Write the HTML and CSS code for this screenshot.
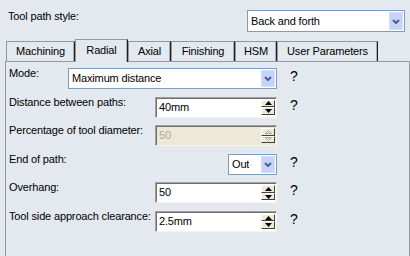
FILE: index.html
```html
<!DOCTYPE html>
<html>
<head>
<meta charset="utf-8">
<link rel="stylesheet" href="styles.css">
</head>
<body>
<div class="top">
  <span class="top-label">Tool path style:</span>
  <div class="combo combo-style">
    <span class="combo-text">Back and forth</span>
    <span class="combo-btn"><svg width="8" height="5" viewBox="0 0 8 5"><polyline points="1,1 4,4 7,1" fill="none" stroke="#4d6185" stroke-width="2"/></svg></span>
  </div>
</div>
<div class="tabs">
  <div class="tab tab-machining">Machining</div>
  <div class="tab tab-radial active">Radial</div>
  <div class="tab tab-axial">Axial</div>
  <div class="tab tab-finishing">Finishing</div>
  <div class="tab tab-hsm">HSM</div>
  <div class="tab tab-user">User Parameters</div>
</div>
<div class="panel">
  <div class="row">
    <span class="label">Mode:</span>
    <div class="combo combo-mode">
      <span class="combo-text">Maximum distance</span>
      <span class="combo-btn"><svg width="8" height="5" viewBox="0 0 8 5"><polyline points="1,1 4,4 7,1" fill="none" stroke="#4d6185" stroke-width="2"/></svg></span>
    </div>
    <span class="help">?</span>
  </div>
  <div class="row">
    <span class="label">Distance between paths:</span>
    <div class="spin">
      <span class="spin-text">40mm</span>
      <span class="spin-btns">
        <span class="spin-btn"><svg width="7" height="4" viewBox="0 0 7 4"><path d="M0 4 L3.5 0 L7 4 Z" fill="#000"/></svg></span>
        <span class="spin-btn"><svg width="7" height="4" viewBox="0 0 7 4"><path d="M0 0 L3.5 4 L7 0 Z" fill="#000"/></svg></span>
      </span>
    </div>
    <span class="help">?</span>
  </div>
  <div class="row">
    <span class="label">Percentage of tool diameter:</span>
    <div class="spin disabled">
      <span class="spin-text">50</span>
      <span class="spin-btns">
        <span class="spin-btn"><svg width="7" height="4" viewBox="0 0 7 4"><path d="M0.5 3.5 L3.5 0.5 L6.5 3.5 Z" fill="none" stroke="#aca899" stroke-width="1"/></svg></span>
        <span class="spin-btn"><svg width="7" height="4" viewBox="0 0 7 4"><path d="M0.5 0.5 L3.5 3.5 L6.5 0.5 Z" fill="none" stroke="#aca899" stroke-width="1"/></svg></span>
      </span>
    </div>
    <span class="help"></span>
  </div>
  <div class="row">
    <span class="label">End of path:</span>
    <div class="combo combo-out">
      <span class="combo-text">Out</span>
      <span class="combo-btn"><svg width="8" height="5" viewBox="0 0 8 5"><polyline points="1,1 4,4 7,1" fill="none" stroke="#4d6185" stroke-width="2"/></svg></span>
    </div>
    <span class="help">?</span>
  </div>
  <div class="row">
    <span class="label">Overhang:</span>
    <div class="spin">
      <span class="spin-text">50</span>
      <span class="spin-btns">
        <span class="spin-btn"><svg width="7" height="4" viewBox="0 0 7 4"><path d="M0 4 L3.5 0 L7 4 Z" fill="#000"/></svg></span>
        <span class="spin-btn"><svg width="7" height="4" viewBox="0 0 7 4"><path d="M0 0 L3.5 4 L7 0 Z" fill="#000"/></svg></span>
      </span>
    </div>
    <span class="help">?</span>
  </div>
  <div class="row">
    <span class="label">Tool side approach clearance:</span>
    <div class="spin">
      <span class="spin-text">2.5mm</span>
      <span class="spin-btns">
        <span class="spin-btn"><svg width="7" height="4" viewBox="0 0 7 4"><path d="M0 4 L3.5 0 L7 4 Z" fill="#000"/></svg></span>
        <span class="spin-btn"><svg width="7" height="4" viewBox="0 0 7 4"><path d="M0 0 L3.5 4 L7 0 Z" fill="#000"/></svg></span>
      </span>
    </div>
    <span class="help">?</span>
  </div>
</div>
</body>
</html>
```
FILE: styles.css
```css
html, body {
  margin: 0;
  height: 100%;
  overflow: hidden;
}
body {
  background: #e3e9ef;
  font-family: "Liberation Sans", Arial, sans-serif;
  font-size: 11px;
  line-height: 13px;
  letter-spacing: -0.15px;
  color: #000;
}
.top {
  display: flex;
  justify-content: space-between;
  align-items: flex-start;
  padding: 10px 5px 0 8px;
  height: 29px;
}
.top-label {
  white-space: nowrap;
}
.combo {
  box-sizing: border-box;
  display: flex;
  align-items: center;
  height: 21px;
  border: 1px solid #7f9db9;
  background: #fff;
  padding-left: 3px;
}
.combo-style {
  width: 158px;
  height: 22px;
}
.combo-mode {
  width: 209px;
}
.combo-out {
  width: 49px;
}
.combo-text {
  white-space: nowrap;
  overflow: hidden;
}
.combo-btn {
  margin: 1px 1px 1px auto;
  align-self: stretch;
  width: 14px;
  flex: none;
  display: flex;
  align-items: center;
  justify-content: center;
  background: #c3d3fb;
  box-shadow: inset 0 0 0 1px #d3def9;
}
.tabs {
  display: flex;
  align-items: flex-end;
  padding-left: 6px;
  height: 22px;
}
.tab {
  box-sizing: border-box;
  height: 20px;
  border: 1px solid #919b9c;
  border-bottom: none;
  border-right-color: #1e1e1e;
  box-shadow: inset -1px 0 0 #a8aeb3;
  text-align: center;
  line-height: 19px;
  flex: none;
}
.tab.active {
  position: relative;
  z-index: 1;
  height: 23px;
  margin-bottom: -1px;
  background: #e3e9ef;
  line-height: 21px;
  padding-bottom: 2px;
}
.tab-machining { width: 69px; }
.tab-radial { width: 53px; }
.tab-axial { width: 43px; }
.tab-finishing { width: 64px; }
.tab-hsm { width: 42px; }
.tab-user { width: 101px; }
.panel {
  box-sizing: border-box;
  margin-left: 5px;
  width: 405px;
  height: 195px;
  border: 1px solid #919b9c;
  border-bottom: none;
  padding: 6px 0 0 3px;
  display: flex;
  flex-direction: column;
  gap: 7.6px;
}
.row {
  display: flex;
  align-items: flex-start;
  width: 291px;
  height: 21px;
  flex: none;
}
.label {
  flex: 1;
  min-width: 0;
  white-space: nowrap;
  margin-top: -1px;
}
.help {
  flex: none;
  width: 10px;
  margin-left: 13px;
  font-size: 14px;
  line-height: 16px;
}
.spin {
  box-sizing: border-box;
  width: 122px;
  height: 21px;
  display: flex;
  align-items: center;
  background: #fff;
  border: 1px solid;
  border-color: #a0a0a0 #f4f3ee #f4f3ee #a0a0a0;
  box-shadow: inset 1px 1px 0 #6e6e6e;
  padding-left: 3px;
  flex: none;
}
.spin.disabled {
  background: #ece9d8;
  color: #aca899;
}
.spin-text {
  white-space: nowrap;
}
.spin-btns {
  margin-left: auto;
  margin-right: 1px;
  width: 14px;
  height: 15px;
  display: flex;
  flex-direction: column;
  flex: none;
}
.spin-btn {
  box-sizing: border-box;
  flex: 1;
  display: flex;
  align-items: center;
  justify-content: center;
  background: #ece9d8;
  border: 1px solid;
  border-color: #fff #404040 #404040 #fff;
}
```
